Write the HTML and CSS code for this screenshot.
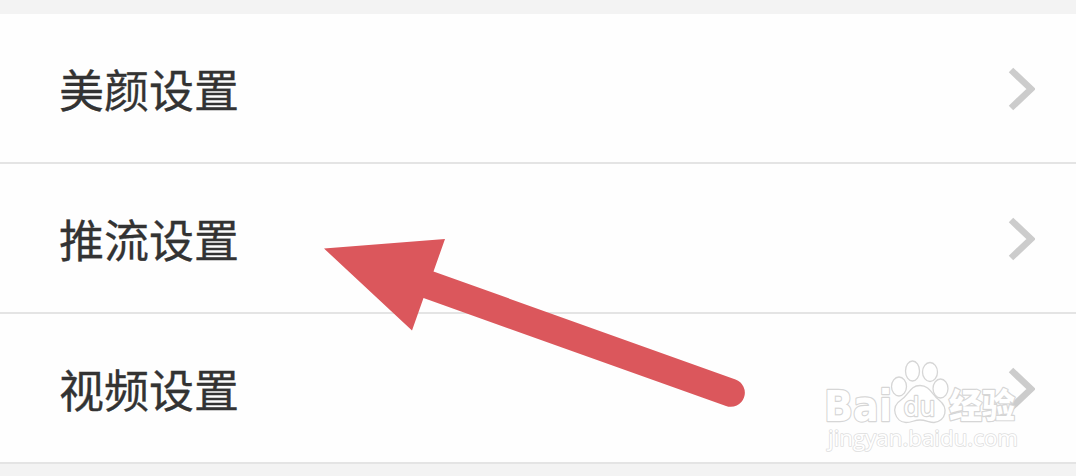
FILE: index.html
```html
<!DOCTYPE html>
<html lang="zh-CN">
<head>
<meta charset="UTF-8">
<meta name="viewport" content="width=device-width, initial-scale=1.0">
<title>设置</title>
<link rel="stylesheet" href="styles.css">
</head>
<body>
<div class="page">
    <ul class="settings">
        <li class="row">
            <span>美颜设置</span>
            <svg class="chevron" viewBox="0 0 28 44"><path d="M4 3 L24 22 L4 41"/></svg>
        </li>
        <li class="row">
            <span>推流设置</span>
            <svg class="chevron" viewBox="0 0 28 44"><path d="M4 3 L24 22 L4 41"/></svg>
        </li>
        <li class="row">
            <span>视频设置</span>
            <svg class="chevron" viewBox="0 0 28 44"><path d="M4 3 L24 22 L4 41"/></svg>
        </li>
    </ul>

    <!-- pointer over the second row -->
    <svg class="arrow" viewBox="0 0 422 172">
        <path d="M0 9.5 L121 0 L109.5 32.5 L411.5 140.5 A14 14 0 0 1 402 167 L99.5 59 L88 91.5 Z"/>
    </svg>

    <!-- watermark -->
    <svg class="watermark" viewBox="0 0 200 96">
        <g class="outline">
            <text class="brand" x="3" y="63.500" textLength="68" lengthAdjust="spacingAndGlyphs">Bai</text>
            <ellipse cx="78" cy="29.500" rx="7.500" ry="9.500"/>
            <ellipse cx="91.500" cy="14" rx="7" ry="10"/>
            <ellipse cx="109" cy="15" rx="7.500" ry="9.500"/>
            <ellipse cx="119.500" cy="31.500" rx="7.500" ry="9.500"/>
            <path d="M99 28.500 C89 28.500 88 38 80 43 C69 50 74 65 85 65.500 C91 65.500 93 63 99 63 C105 63 108 65.500 113 65.500 C125 64 128 51 118 43 C111 38 109 28.500 99 28.500 Z"/>
            <text class="du" x="82.500" y="59" textLength="32" lengthAdjust="spacingAndGlyphs">du</text>
            <text class="exp" x="128" y="61" textLength="66" lengthAdjust="spacingAndGlyphs">经验</text>
            <text class="url" x="7" y="89" textLength="190" lengthAdjust="spacingAndGlyphs">jingyan.baidu.com</text>
        </g>
    </svg>
</div>
</body>
</html>
```
FILE: styles.css
```css
*{
    box-sizing:border-box;
}
body{
    margin:0;
    background:#f3f3f3;
    color:#333;
    font-family:"Noto Sans CJK SC", sans-serif;
}
.page{
    position:relative;
    height:476px;
    overflow:hidden;
    padding-top:14px;
}
.settings{
    list-style:none;
    margin:0;
    padding:0;
    background:#fefefe;
}
.row{
    display:flex;
    justify-content:space-between;
    align-items:center;
    height:150px;
    padding:2px 41px 0 59px;
    border-bottom:2px solid #e4e4e4;
    font-size:45px;
    line-height:66px;
    -webkit-text-stroke:.3px #333;
}
.chevron{
    width:28px;
    height:44px;
    fill:none;
    stroke:#ccc;
    stroke-width:6.5;
}
.arrow{
    position:absolute;
    left:324px;
    top:239px;
    width:422px;
    height:172px;
    fill:#db575c;
}
.watermark{
    position:absolute;
    left:821px;
    top:357px;
    width:200px;
    height:96px;
}
.outline{
    fill:#fff;
    stroke:#d6d6d6;
    stroke-width:1.3;
    stroke-linejoin:round;
}
.outline text{
    paint-order:stroke;
    stroke-width:2.4;
}
.outline .brand{
    font-family:"DejaVu Sans", sans-serif;
    font-size:43px;
    font-weight:bold;
}
.outline .du{
    font-family:"DejaVu Sans", sans-serif;
    font-size:27px;
}
.outline .exp{
    font-family:"Noto Sans CJK SC", sans-serif;
    font-size:34px;
    font-weight:900;
}
.outline .url{
    font-family:"Open Sans", sans-serif;
    font-size:22px;
    stroke:#dedede;
    stroke-width:1.6;
}
```
